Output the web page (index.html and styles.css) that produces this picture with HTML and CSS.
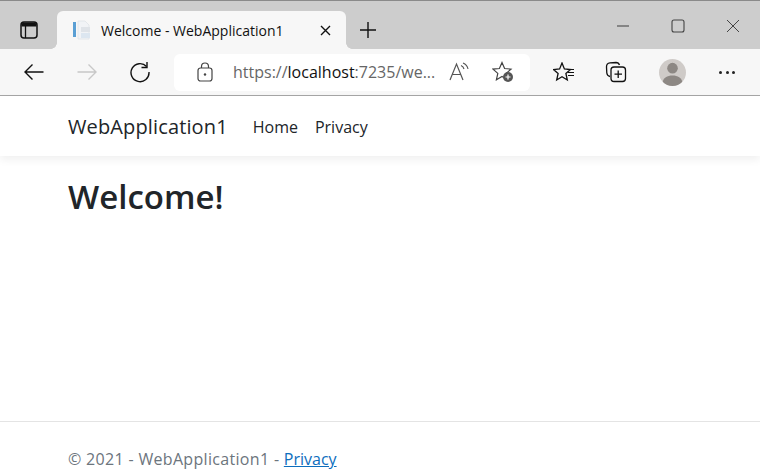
FILE: index.html
```html
<!DOCTYPE html>
<html lang="en">
<head>
<meta charset="utf-8">
<title>Welcome - WebApplication1</title>
<link rel="stylesheet" href="styles.css">
</head>
<body>
<div class="window">
  <div class="tabstrip">
    <button class="tab-toggle" aria-label="Tab actions">
      <svg width="18" height="18" viewBox="0 0 18 18"><rect x="1" y="1" width="16" height="16" rx="3" fill="none" stroke="#111" stroke-width="1.5"/><path d="M1.5 5.5V4A2.5 2.5 0 0 1 4 1.5h10A2.5 2.5 0 0 1 16.500 4v1.500z" fill="#111"/><path d="M5.500 5v12" stroke="#111" stroke-width="1.300"/></svg>
    </button>
    <div class="tab">
      <svg class="favicon" width="20" height="20" viewBox="0 0 20 20"><rect x="1" y="2" width="3" height="15" fill="#5a9fd4"/><path d="M6 1h7l4 4v14H6z" fill="#f1f3f6" stroke="#dfe3e8" stroke-width=".8"/><rect x="9" y="7" width="9" height="5" fill="#dfe3e8"/><rect x="9" y="13" width="9" height="5" fill="#dce6f0"/></svg>
      <span class="tab-title">Welcome - WebApplication1</span>
      <svg class="tab-close" width="11" height="11" viewBox="0 0 11 11"><path d="M1 1l9 9M10 1l-9 9" stroke="#111" stroke-width="1.400"/></svg>
    </div>
    <svg class="new-tab" width="18" height="18" viewBox="0 0 18 18"><path d="M9 1v16M1 9h16" stroke="#111" stroke-width="1.400"/></svg>
    <div class="win-controls">
      <svg width="14" height="14" viewBox="0 0 14 14"><path d="M1 7h12" stroke="#555" stroke-width="1.200"/></svg>
      <svg width="14" height="14" viewBox="0 0 14 14"><rect x="1" y="1" width="12" height="12" rx="2" fill="none" stroke="#444" stroke-width="1.100"/></svg>
      <svg width="14" height="14" viewBox="0 0 14 14"><path d="M1 1l12 12M13 1L1 13" stroke="#444" stroke-width="1"/></svg>
    </div>
  </div>
  <div class="toolbar">
    <svg class="tool-back" width="22" height="18" viewBox="0 0 22 18"><path d="M20.500 9H2M9.500 1.500L2 9l7.500 7.500" fill="none" stroke="#111" stroke-width="1.400"/></svg>
    <svg class="tool-forward" width="22" height="18" viewBox="0 0 22 18"><path d="M1.500 9H20M12.500 1.500L20 9l-7.500 7.500" fill="none" stroke="#c8c8c8" stroke-width="1.400"/></svg>
    <svg class="tool-reload" width="22" height="22" viewBox="0 0 22 22"><path d="M17.600 5.500A9 9 0 1 0 20 11" fill="none" stroke="#111" stroke-width="1.400"/><path d="M18 1v5.500h-5.500" fill="none" stroke="#111" stroke-width="1.400"/></svg>
    <div class="address">
      <svg class="lock" width="16" height="20" viewBox="0 0 16 20"><rect x="1" y="6" width="14" height="13" rx="2.500" fill="none" stroke="#444" stroke-width="1.200"/><path d="M4.500 6V4.500a3.500 3.500 0 0 1 7 0V6" fill="none" stroke="#444" stroke-width="1.200"/><circle cx="8" cy="12.500" r="1.200" fill="#444"/></svg>
      <span class="url">https://<b class="host">localhost</b>:7235/we...</span>
      <svg class="read" width="22" height="20" viewBox="0 0 22 20"><path d="M1 18L7.500 2 14 18M3.500 12.500h8" fill="none" stroke="#555" stroke-width="1.200"/><path d="M12 3.500a5 5 0 0 1 3 3.500M14 1a8 8 0 0 1 5 6" fill="none" stroke="#555" stroke-width="1.100"/></svg>
      <svg class="fav-add" width="22" height="22" viewBox="0 0 22 22"><path d="M10 1.500l2.600 6 6.400.6-4.800 4.300 1.400 6.300L10 15.400l-5.600 3.300 1.400-6.300L1 8.100l6.400-.6z" fill="none" stroke="#444" stroke-width="1.200"/><circle cx="16" cy="16" r="5" fill="#555"/><path d="M16 13.500v5M13.500 16h5" stroke="#fff" stroke-width="1.200"/></svg>
    </div>
    <svg class="favs" width="22" height="20" viewBox="0 0 22 20"><path d="M9 1l2.400 6 6.100.5-4.600 4 1.400 6.500L9 14.700 3.700 18l1.400-6.500-4.600-4L6.600 7z" fill="none" stroke="#111" stroke-width="1.300"/><path d="M14 7.500h7M15 10.500h6M15 13.500h6" stroke="#111" stroke-width="1.200"/></svg>
    <svg class="colls" width="22" height="22" viewBox="0 0 22 22"><path d="M5 15.500C2.500 15 2 13.500 1.800 12L1.500 6C1.400 3.500 3 2 5 1.800L11 1.500c2 0 3 1 3.500 2.500" fill="none" stroke="#111" stroke-width="1.300"/><rect x="6" y="6" width="14.500" height="14.500" rx="3" fill="#f7f7f7" stroke="#111" stroke-width="1.300"/><path d="M13.200 9.500v7.500M9.500 13.200h7.500" stroke="#111" stroke-width="1.300"/></svg>
    <div class="avatar"><svg width="28" height="28" viewBox="0 0 28 28"><circle cx="14" cy="10" r="5.500" fill="#8d8884"/><path d="M3.500 25c1-5 5-7.500 10.500-7.500S23.500 20 24.500 25A14 14 0 0 1 3.500 25z" fill="#8d8884"/></svg></div>
    <div class="more"><i></i><i></i><i></i></div>
  </div>
  <nav class="navbar">
    <a class="brand">WebApplication1</a>
    <a class="nav-link">Home</a>
    <a class="nav-link">Privacy</a>
  </nav>
  <main class="content">
    <h1 class="welcome">Welcome!</h1>
  </main>
  <footer class="footer">© 2021 - WebApplication1 - <a class="footer-link">Privacy</a></footer>
</div>
</body>
</html>
```
FILE: styles.css
```css
* { box-sizing: border-box; }
html, body { margin: 0; padding: 0; }
body { width: 760px; height: 472px; overflow: hidden; background: #fff; font-family: "Open Sans", "Noto Sans", sans-serif; }
.window { display: flex; flex-direction: column; height: 472px; }

.tabstrip { height: 49px; flex: none; display: flex; align-items: flex-end; background: #cdcdcd; border-top: 1px solid #8a8a8a; padding-left: 20px; }
.tab-toggle { width: 18px; height: 18px; padding: 0; border: 0; background: none; margin: 0 19px 10px 0; display: block; }
.tab { width: 289px; height: 38px; background: #f7f7f7; border-radius: 6px 6px 0 0; display: flex; align-items: center; padding: 0 15px; position: relative; }
.tab::before, .tab::after { content: ""; position: absolute; bottom: 0; width: 6px; height: 6px; }
.tab::before { left: -6px; background: radial-gradient(circle at 0 0, transparent 5.500px, #f7f7f7 6px); }
.tab::after { right: -6px; background: radial-gradient(circle at 100% 0, transparent 5.500px, #f7f7f7 6px); }
.favicon { flex: none; margin-right: 9px; }
.tab-title { flex: 1; font-size: 14px; color: #111; white-space: nowrap; }
.tab-close { flex: none; }
.new-tab { margin: 0 0 10px 13px; flex: none; }
.win-controls { margin: 0 20px 16px auto; display: flex; gap: 41px; }

.toolbar { height: 47px; flex: none; display: flex; align-items: center; background: #f7f7f7; border-bottom: 1px solid #a6a6a6; padding: 0 0 0 23px; }
.tool-forward { margin-left: 31px; }
.tool-reload { margin-left: 31px; }
.address { width: 356px; height: 37px; margin-left: 23px; background: #fff; border-radius: 6px; display: flex; align-items: center; padding-left: 23px; }
.url { font-size: 16px; color: #666; margin-left: 20px; white-space: nowrap; width: 204px; }
.host { font-weight: 400; color: #111; }
.read { margin-left: 12px; }
.fav-add { margin-left: 21px; }
.favs { margin-left: 23px; }
.colls { margin-left: 30px; }
.avatar { width: 27px; height: 27px; border-radius: 50%; background: #cfcbc8; margin-left: 32px; overflow: hidden; display: flex; align-items: flex-end; justify-content: center; }
.more { display: flex; gap: 3.500px; margin-left: 33px; }
.more i { width: 3px; height: 3px; border-radius: 50%; background: #222; }

.navbar { height: 60px; flex: none; background: #fff; display: flex; align-items: center; padding: 2px 0 0 68px; box-shadow: 0 4px 8px rgba(0, 0, 0, .06); position: relative; }
.brand { font-size: 20px; letter-spacing: 0.13px; color: #212529; margin: 0 25px 2px 0; }
.nav-link { font-size: 16px; color: #212529; margin-right: 17px; }

.content { flex: 1; padding: 21px 68px 0; }
.welcome { margin: 0; font-size: 33px; font-weight: 600; line-height: 40px; color: #212529; }

.footer { flex: none; height: 51px; border-top: 1px solid #e4e4e4; padding: 25px 0 0 68px; font-size: 16px; line-height: 24px; letter-spacing: 0.32px; color: #6c757d; white-space: nowrap; }
.footer-link { color: #0d6ebd; text-decoration: underline; letter-spacing: 0; }
```
